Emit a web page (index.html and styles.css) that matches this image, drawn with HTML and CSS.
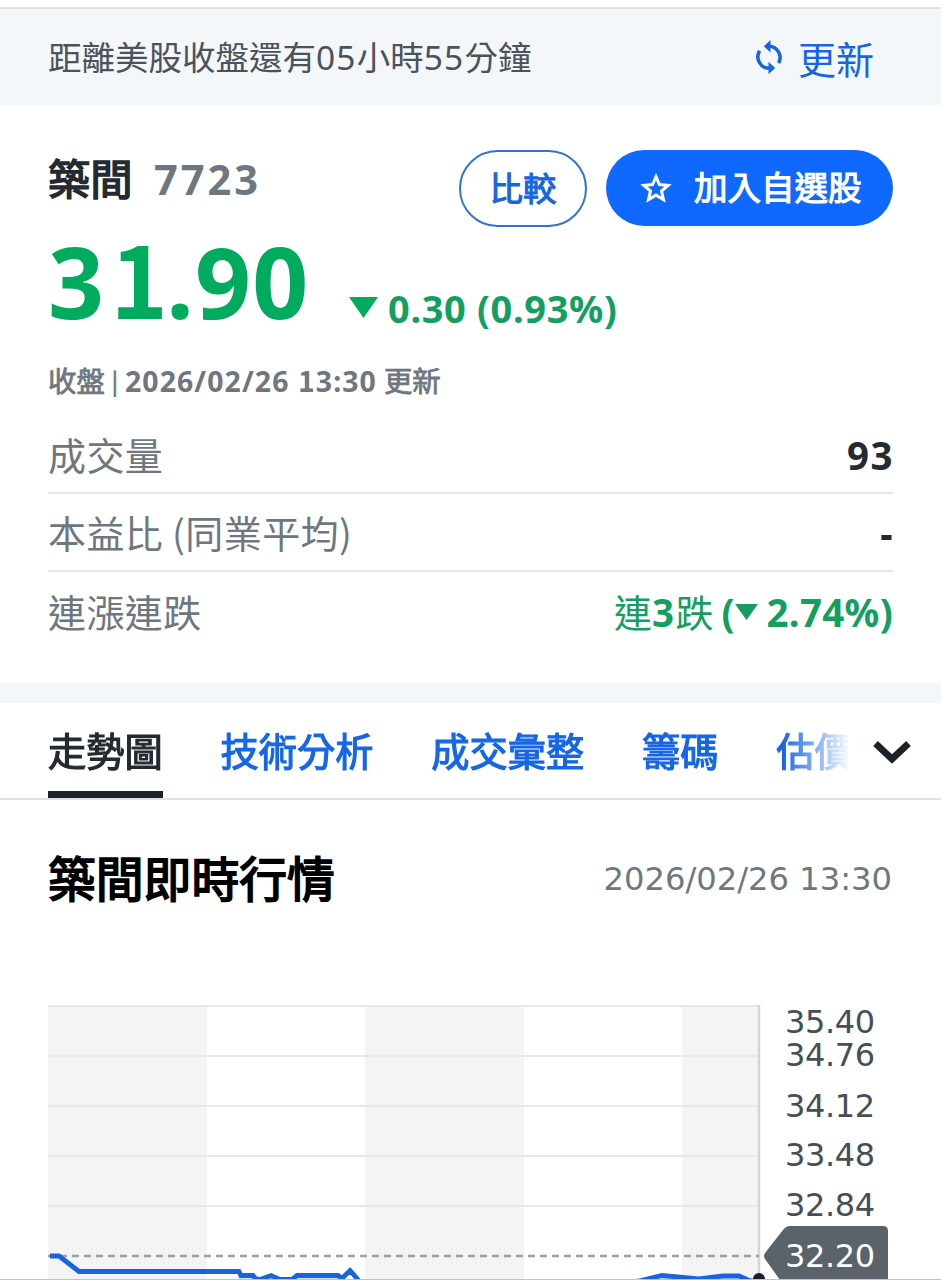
FILE: index.html
```html
<!DOCTYPE html>
<html lang="zh-Hant">
<head>
<meta charset="utf-8">
<title>築間 7723</title>
<link rel="stylesheet" href="styles.css">
</head>
<body>
<div class="page">
  <header class="notice">
    <span class="countdown">距離美股收盤還有<span class="thin-num">05</span>小時<span class="thin-num">55</span>分鐘</span>
    <button class="refresh">
      <svg width="28" height="36" viewBox="0 0 28 36" fill="none" stroke="currentColor" stroke-width="3.6">
        <path d="M4.6 11.8A11.5 11.5 0 0 0 14 29.3"/><path d="M14 7.2A11.3 11.3 0 0 1 23.6 24"/>
        <path d="M15.5 1v12.4L8.8 7.2zM13.5 22.8v12.4l6.7-6.2z" fill="currentColor" stroke="none"/>
      </svg>
      <span>更新</span>
    </button>
  </header>

  <section class="quote">
    <div class="head">
      <h1 class="name">築間</h1><span class="code">7723</span>
      <button class="compare">比較</button>
      <button class="follow">
        <svg width="32" height="32" viewBox="0 0 32 32" fill="none" stroke="currentColor" stroke-width="3"><path d="M16 4.6l3.4 8 8.7.8-6.6 5.7 2 8.5-7.5-4.5-7.5 4.5 2-8.5-6.6-5.7 8.7-.8z"/></svg>
        <span>加入自選股</span>
      </button>
    </div>
    <div class="price-line">
      <span class="price">3<span class="one">1</span>.90</span>
      <svg class="down" width="30" height="22" viewBox="0 0 30 22"><path d="M0 0h29L14.5 21z" fill="currentColor"/></svg>
      <span class="change">0.30 (0.93%)</span>
    </div>
    <p class="status">收盤<span class="bar">|</span><span class="status-num">2026/02/26 <span class="one">1</span>3:30</span>更新</p>
    <dl class="facts">
      <div class="fact"><dt>成交量</dt><dd>93</dd></div>
      <div class="fact"><dt>本益比 (同業平均)</dt><dd>-</dd></div>
      <div class="fact"><dt>連漲連跌</dt><dd class="fall"><span class="light">連</span>3<span class="light">跌</span><span class="paren">(</span><svg width="23" height="17" viewBox="0 0 23 17"><path d="M0 0h23L11.5 16z" fill="currentColor"/></svg><span class="pct">2.74%)</span></dd></div>
    </dl>
  </section>

  <nav class="tabs">
    <div class="tab-list">
      <a class="tab active">走勢圖</a><a class="tab">技術分析</a><a class="tab">成交彙整</a><a class="tab">籌碼</a><a class="tab">估價</a>
    </div>
    <svg class="more" width="38" height="26" viewBox="0 0 38 26" fill="none" stroke="currentColor" stroke-width="6.8"><path d="M2.5 3.5L19 19 35.5 3.5"/></svg>
  </nav>

  <section class="trend">
    <div class="trend-head"><h2>築間即時行情</h2><time>2026/02/26 13:30</time></div>
    <svg class="chart" width="893" height="275" viewBox="0 1005 893 275">
      <g fill="#f4f4f4"><path d="M0 1006h159v274H0zM317 1006h159v274H317zM634 1006h78v274h-78z"/></g>
      <g stroke="#e8e8e8" stroke-width="2"><path d="M0 1006H712M0 1056H712M0 1106H712M0 1156H712M0 1206H712"/></g>
      <path d="M711 1005v275" stroke="#d4d4d4" stroke-width="2.5"/>
      <path d="M0 1256H711" stroke="#a0a0a0" stroke-width="2.4" stroke-dasharray="7 5"/>
      <path d="M190 1280v-5h20l5 5zM244 1280l5-4h41l4 4zM590 1280l24-4 25 4zM650 1280l20-2 10 2z" fill="#cfe3ff"/>
      <g fill="none" stroke="#1764dc" stroke-width="4.8">
        <path d="M2 1256h9l20 15.5h160l2 4h12l3 4h4l11-4 9 4h12l5-4h41l4 3 8-8 7 8 4 6"/>
        <path d="M565 1284l26-3 23-5.5 37 3.5 24-3h16l9 4 12 3"/>
      </g>
      <circle cx="711" cy="1279" r="6" fill="#1c1f28"/>
      <path d="M717 1253l18-23q3-4 7-4h93q5 0 5 5v49H732l-15-21q-2-3 0-6z" fill="#5b636a"/>
      <g class="ticks">
        <text x="737" y="1033" textLength="90">35.40</text>
        <text x="737" y="1066" textLength="90">34.76</text>
        <text x="737" y="1117" textLength="90">34.12</text>
        <text x="737" y="1166" textLength="90">33.48</text>
        <text x="737" y="1216" textLength="90">32.84</text>
        <text class="current" x="737" y="1266.5" textLength="90">32.20</text>
      </g>
    </svg>
  </section>
</div>
</body>
</html>
```
FILE: styles.css
```css
* { box-sizing: border-box; }
body, h1, h2, p, dl, dd { margin: 0; }
body { background: #fff; font-family: "Noto Sans", "Noto Sans CJK TC", sans-serif; color: #232a31; }
button { border: 0; background: none; padding: 0; font: inherit; white-space: nowrap; }
svg { flex: none; }
.page { width: 941px; height: 1280px; overflow: hidden; border-bottom: 1px solid #cbb8e6; padding-top: 7px; }
.notice { height: 98px; border-top: 2px solid #dfe2e6; background: #f3f7fa; display: flex; justify-content: space-between; padding: 0 67px 0 48px; }
.countdown { font: 33.5px/94px "Noto Sans CJK TC", sans-serif; color: #4c525a; }
.thin-num { font-family: "Noto Sans"; letter-spacing: 1.2px; }
.refresh { display: flex; align-items: center; color: #1766e0; font: 38px/98px "Noto Sans CJK TC", sans-serif; height: 98px; gap: 15px; }
.refresh svg { margin-top: -2px; }

.quote { height: 578px; padding: 45px 48px 0; }
.head { display: flex; align-items: center; height: 76px; white-space: nowrap; }
.name { font: 400 42.3px/60px "Noto Sans CJK TC", sans-serif; -webkit-text-stroke: 1.6px; margin-top: -23px; width: 106px; }
.code { font: 700 41.5px/60px "Noto Sans", sans-serif; letter-spacing: 3px; color: #6e7780; margin-top: -18px; flex: 1; }
.compare { width: 128px; height: 77px; border: 2px solid #3274cc; border-radius: 39px; color: #1766e0; font: 400 33.5px/70px "Noto Sans CJK TC", sans-serif; -webkit-text-stroke: 1.1px; padding-bottom: 3px; }
.follow { width: 287px; height: 76px; margin-left: 19px; border-radius: 38px; background: #0f69ff; color: #fff; display: flex; align-items: center; padding-left: 34px; gap: 22px; font: 400 33.5px/72px "Noto Sans CJK TC", sans-serif; }
.follow span { -webkit-text-stroke: 1.1px; margin-top: -5px; }
.one { font-family: "Noto Sans CJK TC"; }
.price-line { display: flex; height: 120px; color: #00ab5e; }
.price { font: 700 98px/101px "Noto Sans", sans-serif; width: 301px; white-space: nowrap; letter-spacing: 1.2px; }
.price .one { margin: 0 -3px 0 5px; }
.down { margin-top: 71px; }
.change { font: 700 38px/60px "Noto Sans", sans-serif; color: #139f60; margin: 52px 0 0 9px; letter-spacing: .65px; }
.status { font: 400 28.4px/44px "Noto Sans CJK TC", sans-serif; -webkit-text-stroke: .8px; color: #6e7780; margin-top: 12px; white-space: nowrap; height: 44px; }
.status-num { font-family: "Noto Sans"; font-weight: 700; -webkit-text-stroke: 0; letter-spacing: 1.1px; margin-right: 7px; }
.bar { margin: 0 7px; font-size: 23px; position: relative; top: -2px; }
.facts { margin-top: 14px; }
.fact { height: 78px; display: flex; justify-content: space-between; align-items: center; border-bottom: 2px solid #e5e5e5; line-height: 74px; padding-bottom: 1px; }
.fact:last-child { border: 0; }
.fact dt { font: 38px/72px "Noto Sans CJK TC", sans-serif; letter-spacing: .4px; color: #6e7780; margin-top: 1px; }
.fact dd { font: 700 38.5px/74px "Noto Sans", sans-serif; letter-spacing: 1.5px; margin: 3px -1px 0 0; }
.fact .fall { color: #139f60; display: flex; align-items: center; margin-right: 0; }
.light { font: 400 38px/72px "Noto Sans CJK TC", sans-serif; letter-spacing: 0; margin-top: -2px; }
.paren { margin-left: 8px; letter-spacing: 0; }
.pct { margin-left: 9px; letter-spacing: .3px; }

.tabs { border-top: 20px solid #f3f7fa; height: 117px; border-bottom: 2px solid #e0e0e3; display: flex; padding-left: 48px; }
.tab-list { width: 800px; overflow: hidden; display: flex; gap: 58px; height: 95px; -webkit-mask-image: linear-gradient(90deg, #000 735px, transparent 803px); mask-image: linear-gradient(90deg, #000 735px, transparent 803px); }
.tab { flex: none; font: 400 38.2px/93px "Noto Sans CJK TC", sans-serif; -webkit-text-stroke: 1.2px; color: #1667e6; height: 95px; }
.tab.active { color: #232a31; border-bottom: 7px solid #1d2228; }
.more { margin: 37px 0 0 25px; color: #1d2228; }

.trend { padding-left: 48px; }
.trend-head { display: flex; justify-content: space-between; height: 205px; padding-right: 49px; }
.trend-head h2 { font: 400 47.8px/154px "Noto Sans CJK TC", sans-serif; -webkit-text-stroke: 1.8px; color: #000; }
.trend-head time { font: 32.2px/158px "DejaVu Sans", sans-serif; color: #6e7780; }
.chart { display: block; }
.ticks { font: 32px "DejaVu Sans", sans-serif; fill: #464e56; }
.current { fill: #fff; }
```
